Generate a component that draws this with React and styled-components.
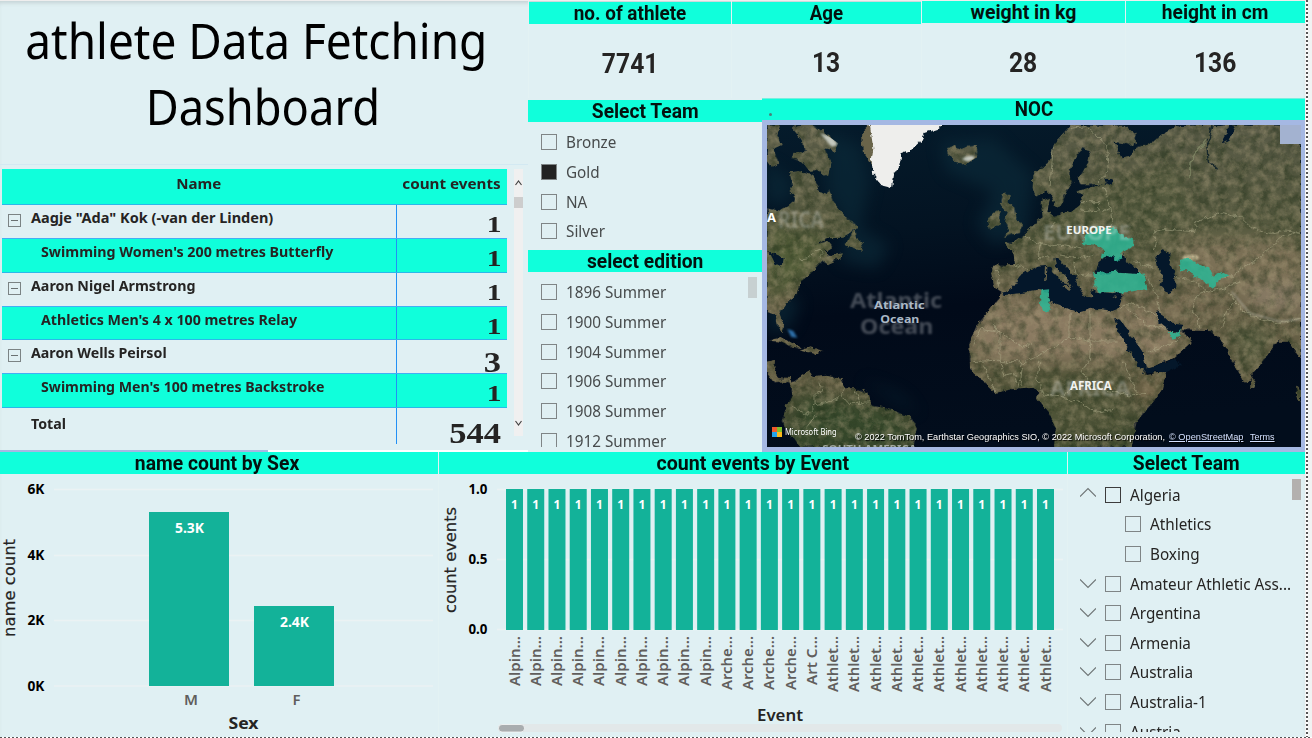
import React from "react";
import styled, { createGlobalStyle, css } from "styled-components";

const GlobalStyle = createGlobalStyle`
  *, *::before, *::after { box-sizing: border-box; }
  body { margin: 0; background: #f3f3f3; overflow: hidden; }
`;

const SEGOE = `"Noto Sans", "Open Sans", sans-serif`;
const DIN = `Roboto, "Liberation Sans", sans-serif`;
const MINT = "#10ffdb";
const BG = "#e0f0f3";
const BAR = "#13b299";

const Page = styled.div`
  display: grid;
  grid-template-columns: 1305px 7px;
  grid-template-rows: 737px 1px;
  width: 1312px;
  height: 738px;
  overflow: hidden;
  font-family: ${SEGOE};
  color: #252423;
`;
const Canvas = styled.main`
  display: grid;
  grid-template-rows: 452px 285px;
  background: ${BG};
  box-shadow: inset 0 1px 0 #efeeee, inset 0 5px 4px -2px #c4d2d4;
`;
const RightEdge = styled.div`
  margin-left: 1px;
  width: 6px;
  background: repeating-linear-gradient(180deg, #555 0 2px, #fff 2px 4px) 0 0 / 2px 100% no-repeat, #f1f3f3;
`;
const BottomEdge = styled.div`
  grid-column: 1 / -1;
  background: repeating-linear-gradient(90deg, #555 0 2px, #fff 2px 4px);
`;

const Top = styled.section`
  display: grid;
  grid-template-columns: 528px 777px;
`;
const Bottom = styled.section`
  display: grid;
  grid-template-columns: 438px 629px 238px;
`;
const Panel = styled.section`
  display: flex;
  flex-direction: column;
  min-width: 0;
  overflow: hidden;
  ${(p) => p.$divided && css`border-left: 1px solid #e3f2f3;`}
`;
const Fit = styled.span`
  display: inline-block;
  white-space: nowrap;
  transform: scaleX(${(p) => p.$x || 1});
  transform-origin: ${(p) => p.$o || "left"} center;
`;
const Header = styled.h2`
  margin: 0;
  height: ${(p) => p.$h || 22}px;
  flex: none;
  display: flex;
  justify-content: center;
  align-items: flex-start;
  padding-top: ${(p) => p.$pt ?? 1}px;
  padding-right: ${(p) => p.$pr || 0}px;
  background: ${MINT};
  color: #04120f;
  font: 700 19.5px/22px ${DIN};
`;

/* title and matrix */
const Left = styled.div`
  display: flex;
  flex-direction: column;
`;
const Title = styled.h1`
  margin: 0;
  height: 165px;
  padding: 7px 16px 0 0;
  display: flex;
  flex-direction: column;
  align-items: center;
  font: 400 49px/66px ${SEGOE};
  color: #000;
  border-bottom: 1px solid #d3e9f2;
`;
const SecondLine = styled.span`
  padding-left: 13px;
`;
const MatrixWrap = styled.div`
  display: flex;
  height: 285px;
  padding: 4px 4px 0 2px;
  gap: 7px;
`;
const Matrix = styled.div`
  width: 505px;
  display: flex;
  flex-direction: column;
`;
const Row = styled.div`
  display: grid;
  grid-template-columns: 394px 111px;
  grid-template-rows: 100%;
  height: ${(p) => p.$h}px;
  background: ${(p) => (p.$fill ? MINT : "transparent")};
  border-top: ${(p) => (p.$fill && !p.$head ? "1px solid #45adf4" : "0")};
  border-bottom: ${(p) => (p.$fill ? "1px solid #2cb7ea" : "0")};
`;
const HeadCell = styled.div`
  padding: 5px ${(p) => (p.$right ? 6 : 0)}px 0 0;
  text-align: ${(p) => (p.$right ? "right" : "center")};
  font: 700 14.5px/19px ${SEGOE};
`;
const NameCell = styled.div`
  display: flex;
  padding: ${(p) => p.$pt || 2}px 0 0 ${(p) => p.$pl}px;
  font: 700 14.5px/20px ${SEGOE};
`;
const NumCell = styled.div`
  display: flex;
  justify-content: flex-end;
  padding: ${(p) => p.$pt}px 6px 0 0;
  border-left: 1px solid #2290f5;
  font: 700 ${(p) => p.$size}px/30px "Liberation Serif", serif;
`;
const Toggle = styled.span`
  width: 13px;
  height: 13px;
  margin: 7px 10px 0 0;
  border: 1px solid #7b8384;
  display: flex;
  align-items: center;
  justify-content: center;
  &::after { content: ""; width: 7px; height: 1px; background: #6a7172; }
`;
const Scroll = styled.div`
  width: 9px;
  height: 267px;
  background: #f0f0f0;
  display: flex;
  flex-direction: column;
  align-items: center;
  padding: 11px 0 10px;
`;
const ScrollThumb = styled.i`
  width: 9px;
  height: 11px;
  margin-top: 11px;
  margin-bottom: auto;
  background: #cdcdcd;
`;
const LeftRule = styled.div`
  height: 2px;
  background: linear-gradient(90deg, #a5b8e3 0 268px, #fff 268px);
`;

/* cards */
const Right = styled.div`
  display: grid;
  grid-template-rows: 98px 354px;
`;
const Cards = styled.div`
  display: grid;
  grid-template-columns: 203px 190px 204px 180px;
`;
const Card = styled.div`
  padding-top: ${(p) => p.$pt}px;
  border-left: 1px solid #e3f2f3;
  display: flex;
  flex-direction: column;
`;
const CardValue = styled.div`
  padding-top: ${(p) => p.$pt || 23}px;
  text-align: center;
  font: 700 28px/34px ${DIN};
`;
const Lower = styled.div`
  display: grid;
  grid-template-columns: 234px 543px;
  min-height: 0;
`;
const Slicers = styled.div`
  padding-top: 2px;
  display: flex;
  flex-direction: column;
`;

/* checkbox lists */
const List = styled.div`
  display: flex;
  height: ${(p) => p.$h}px;
  overflow: hidden;
  padding: ${(p) => p.$pt}px ${(p) => p.$pr || 5}px 0 ${(p) => p.$pl}px;
`;
const Items = styled.ul`
  margin: 0;
  padding: 0;
  flex: 1;
  min-width: 0;
  list-style: none;
`;
const Item = styled.li`
  height: 29.65px;
  display: flex;
  align-items: center;
  padding-left: ${(p) => p.$indent || 0}px;
  font: 400 15.5px/20px ${SEGOE};
  color: ${(p) => (p.$dark ? "#252423" : "#474b4c")};
  svg { flex: none; margin-right: 9px; }
`;
const Box = styled.span`
  flex: none;
  width: 16px;
  height: 16px;
  margin-right: 9px;
  border: 1px solid ${(p) => (p.$dark ? "#3c3c3c" : "#7f8586")};
  background: ${(p) => (p.$on ? "#222" : "transparent")};
`;
const ListThumb = styled.i`
  flex: none;
  width: 9px;
  height: 21px;
  margin-top: ${(p) => p.$mt}px;
  background: ${(p) => p.$c};
`;

/* map */
const MapPanel = styled.div`
  display: flex;
  flex-direction: column;
  background: #a5b8e3;
`;
const MapHeader = styled(Header)`
  position: relative;
  border-top: 1px solid #76efdf;
`;
const Dot = styled.i`
  position: absolute;
  left: 7px;
  top: 14px;
  width: 3px;
  height: 3px;
  border-radius: 50%;
  background: #4a8079;
`;
const MapFrame = styled.div`
  position: relative;
  width: 534px;
  height: 322px;
  margin: 5px 0 0 5px;
  overflow: hidden;
  > svg { display: block; }
`;
const Corner = styled.i`
  position: absolute;
  right: 0;
  top: 0;
  width: 21px;
  height: 19px;
  background: #a3b2d0;
`;
const MapFoot = styled.div`
  position: absolute;
  left: 5px;
  right: 0;
  bottom: 4px;
  display: flex;
  align-items: flex-end;
  color: #fff;
`;
const BingMark = styled.span`
  display: grid;
  grid-template-columns: 5px 5px;
  gap: 0;
  height: 10px;
  margin-bottom: 6px;
  i { width: 5px; height: 5px; }
  i:nth-child(1) { background: #f0592b; }
  i:nth-child(2) { background: #80bc2d; }
  i:nth-child(3) { background: #21a2ea; }
  i:nth-child(4) { background: #fbb91b; }
`;
const BingText = styled.span`
  width: 70px;
  margin: 0 0 4px 3px;
  font: 400 9px/14px ${SEGOE};
`;
const Credit = styled.span`
  width: ${(p) => p.$w}px;
  white-space: nowrap;
  font: 400 9.5px/13px "Liberation Sans", sans-serif;
  text-shadow: 1px 1px 1px #000;
  color: ${(p) => (p.$link ? "#d3e0ff" : "#fff")};
  span { text-decoration: ${(p) => (p.$link ? "underline" : "none")}; }
`;

const Label = ({ x, y, w, size, children, fill = "#252423", weight = 700, anchor = "start", family = SEGOE, rotate, ...rest }) => (
  <text
    x={rotate ? undefined : x}
    y={rotate ? undefined : y}
    transform={rotate ? `translate(${x} ${y}) rotate(-90)` : undefined}
    textLength={w}
    lengthAdjust="spacingAndGlyphs"
    textAnchor={anchor}
    fontFamily={family}
    fontSize={size}
    fontWeight={weight}
    fill={fill}
    {...rest}
  >
    {children}
  </text>
);

const LAND = [
  "M21 340 60 347 84 334 104 318 104 300 88 285 96 262 90 232 120 228 160 240 166 262 178 290 196 300 208 282 214 302 225 330 250 360 285 385 290 402 250 425 205 427 165 448 200 438 215 456 192 470 210 482 250 475 240 490 200 508 186 498 150 538 122 560 112 600 75 630 58 655 72 690 68 712 50 690 42 658 21 652Z",
  "M21 90H60L52 120 62 150 40 160 58 205 35 215 21 195Z",
  "M95 95 120 90H160L200 120 235 145 225 168 195 160 212 200 205 245 180 225 150 230 130 205 95 190 100 172 135 172 128 135Z",
  "M256 452 268 425 284 408 288 430 302 440 312 468 285 460Z",
  "M25 737 50 728 75 732 128 762 98 758 60 740Z",
  "M122 766 150 757 192 768 160 776Z",
  "M21 800 45 795 42 835 60 850 92 852 96 868 78 862 45 864 21 830Z",
  "M90 868 125 842 150 828 158 846 200 842 245 852 252 880 290 880 322 895 332 930 400 946 455 968 470 1000 462 1056H120L95 1020 65 980 80 935 96 900Z",
  "M562 158 585 150 590 165 620 152 650 150 654 182 615 210 582 200 580 186 566 178Z",
  "M725 300 750 298 742 322 765 342 770 370 786 392 780 416 755 418 732 427 750 402 735 382 742 352 722 330Z",
  "M698 355 718 348 720 388 690 404 684 380Z",
  "M735 445 765 440 790 420 830 382 848 370 842 320 870 308 862 350 880 365 935 350 960 330 970 300 950 288 1000 275 1030 268 960 268 955 250 985 200 992 165 965 160 940 200 925 235 938 262 920 290 905 330 885 335 875 300 860 285 830 305 818 280 820 240 870 195 880 150 930 95 930 90H1092L1130 120 1120 150 1060 140 1085 190 1110 185 1130 155 1180 140 1200 122 1230 105 1260 90H1623V790L1605 765 1585 740 1550 740 1530 770 1500 810 1478 835 1460 867 1435 830 1400 760 1390 745 1370 725 1345 705 1270 703 1250 690 1262 702 1295 740 1240 790 1160 822 1148 816 1160 840 1218 830 1205 885 1180 920 1130 980 1115 1056H882L888 1000 866 950 828 905 842 890 815 876 760 882 706 893 660 850 630 822 628 745 650 690 690 645 720 605 722 590 704 578 693 530 700 512 765 510 760 470Z",
  "M1472 842 1486 860 1484 878 1474 878Z",
  "M1608 870 1623 890V925L1612 905Z",
];
const SEAS = [
  "M722 590 755 582 780 545 830 515 868 512 885 540 905 560 932 572 915 540 885 512 880 490 900 495 945 545 960 580 975 605 1000 608 988 582 1012 590 1060 595 1084 590 1084 620 1075 642 1060 648 1000 640 962 652 930 645 900 630 865 618 862 590 830 584 780 595 735 600Z",
  "M1010 532 1020 492 1050 476 1070 494 1092 478 1100 505 1130 520 1135 535 1070 530 1030 542Z",
  "M1186 490 1210 466 1235 475 1228 508 1246 540 1246 580 1222 592 1198 570 1208 540 1190 512Z",
  "M1062 668 1084 676 1112 718 1146 768 1158 815 1150 834 1128 800 1096 750 1074 708Z",
  "M1190 648 1210 660 1236 686 1270 690 1256 712 1232 714 1214 696 1196 682Z",
  "M1150 836 1160 818 1200 808 1250 788 1262 812 1220 830Z",
  "M1036 248 1058 250 1056 272 1040 265Z",
  "M1405 90H1425L1408 138 1385 145 1400 118Z",
  "M28 470 48 482 68 490 65 515 45 505Z",
];
const BORDERS =
  "M115 492 150 488 168 462 182 470 186 505M640 748 665 700 720 710 790 760 815 745M700 690 720 712V795L640 800M720 800H790L820 790 875 760 930 725M930 650V725L990 740V735M990 650V738H1070M990 740 985 800 965 830 1000 880 1060 890M720 795 735 840 760 835 775 875M670 815 690 850 705 890M790 800 780 870M840 800 830 850 850 900 900 905 940 880M900 905 960 920 1000 950 1060 940M1060 890 1110 900 1160 895M1090 800 1110 850 1130 890M705 530H715V575M765 510 805 525M790 425 840 445 835 490 870 485M840 445 880 455 920 450 970 460M870 400 890 380M960 345 1010 350 1020 320 960 320M1020 350 1050 340 1040 300 1030 275M1050 340 1060 400M900 480 960 490 1000 480M940 500 950 540 1010 545M1180 410 1220 402 1300 410 1310 380 1385 352 1440 365 1470 395 1530 415 1580 405 1623 412M1180 410 1190 440 1180 465M1620 405 1560 430 1500 490 1440 520 1420 545 1370 550M1245 545 1290 550 1340 590 1310 600 1300 640 1320 700M1340 590 1390 580 1440 560M1410 590 1430 630 1480 665 1560 685 1623 668M1385 700 1400 650 1430 620M1160 545 1190 600 1200 650M1075 642 1120 625 1190 660M1100 640 1160 690 1220 700M1160 770 1230 750 1262 725M880 150 870 280M930 100 980 95 1040 150 1045 230 1010 262M1120 500 1180 520M100 935 140 960 165 930 165 900 185 885 180 860M165 930 210 920 245 900 250 880M285 885 300 925 325 920M245 900 265 925 300 925M165 960 140 1000";

const WorldMap = () => (
  <svg width="534" height="322" viewBox="21 90 1602 966">
    <defs>
      <linearGradient id="ocean" x1="0" y1="0" x2="0.15" y2="1">
        <stop offset="0" stopColor="#051b2b" />
        <stop offset="0.35" stopColor="#031322" />
        <stop offset="0.6" stopColor="#010a19" />
        <stop offset="1" stopColor="#020d1c" />
      </linearGradient>
      <linearGradient id="land" x1="0" y1="90" x2="0" y2="1056" gradientUnits="userSpaceOnUse">
        <stop offset="0" stopColor="#585a46" />
        <stop offset="0.35" stopColor="#55593e" />
        <stop offset="0.55" stopColor="#6b634a" />
        <stop offset="0.8" stopColor="#5e5a40" />
        <stop offset="1" stopColor="#34432a" />
      </linearGradient>
      <filter id="soft" colorInterpolationFilters="sRGB"><feGaussianBlur stdDeviation="22" /></filter>
      <filter id="ghost" colorInterpolationFilters="sRGB"><feGaussianBlur stdDeviation="3.5" /></filter>
      <filter id="rough" x="-5%" y="-5%" width="110%" height="110%" colorInterpolationFilters="sRGB">
        <feTurbulence type="fractalNoise" baseFrequency="0.05" numOctaves="3" seed="4" />
        <feDisplacementMap in="SourceGraphic" scale="20" xChannelSelector="R" yChannelSelector="G" />
      </filter>
      <filter id="grainDark" x="0" y="0" width="100%" height="100%" colorInterpolationFilters="sRGB">
        <feTurbulence type="fractalNoise" baseFrequency="0.03" numOctaves="5" seed="9" />
        <feColorMatrix values="0 0 0 0 0.13  0 0 0 0 0.19  0 0 0 0 0.1  2.4 0 0 0 -0.95" />
      </filter>
      <filter id="grainLight" x="0" y="0" width="100%" height="100%" colorInterpolationFilters="sRGB">
        <feTurbulence type="fractalNoise" baseFrequency="0.04" numOctaves="5" seed="21" />
        <feColorMatrix values="0 0 0 0 0.66  0 0 0 0 0.61  0 0 0 0 0.48  0 2.4 0 0 -0.92" />
      </filter>
      <clipPath id="landClip">
        {LAND.map((d) => <path key={d} d={d} />)}
      </clipPath>
    </defs>
    <rect x="21" y="90" width="1602" height="966" fill="url(#ocean)" />
    <g filter="url(#soft)" fill="#0c2c3b" opacity="0.6">
      <path d="M200 110 300 150 330 260 300 400 390 450 350 520 240 500 260 400 200 290Z" />
      <path d="M540 140 700 130 820 240 800 420 700 450 650 390 700 290 560 230Z" />
      <path d="M21 560 120 620 90 700 21 720ZM21 200 100 260 80 330 21 320Z" />
      <path d="M480 960 420 900 300 850 400 910Z" />
    </g>
    <g filter="url(#rough)">
      {LAND.map((d) => <path key={d} d={d} fill="url(#land)" />)}
    </g>
    <g clipPath="url(#landClip)">
      <g filter="url(#soft)">
        <path d="M650 690 740 620 860 620 1060 660 1110 760 1090 800 640 790Z" fill="#8a7a61" />
        <path d="M1080 640 1180 650 1280 740 1160 810Z" fill="#8a7a61" />
        <path d="M1180 600 1350 600 1330 690 1230 670Z" fill="#776b52" />
        <path d="M1240 430 1500 430 1623 440V640L1450 620 1300 540Z" fill="#7b7056" />
        <path d="M1450 580 1623 560V650L1500 640Z" fill="#897b66" />
        <path d="M21 400 200 430 150 540 21 620Z" fill="#515c38" />
        <path d="M640 830 1080 840 1100 1056H860L820 880Z" fill="#4f5438" />
        <path d="M1400 690 1550 700 1470 840Z" fill="#555a3e" />
        <path d="M1140 870 1200 860 1150 950Z" fill="#866f52" />
        <path d="M120 900 400 950 460 1056H100Z" fill="#37492c" />
        <path d="M900 320 1250 200 1300 380 1050 440 860 430Z" fill="#52583d" />
      </g>
      <ellipse cx="1292" cy="488" rx="24" ry="9" fill="#d8c8a2" filter="url(#ghost)" />
      <rect x="21" y="90" width="1602" height="966" filter="url(#grainDark)" opacity="0.5" />
      <rect x="21" y="90" width="1602" height="966" filter="url(#grainLight)" opacity="0.42" />
      <path d="M180 115 215 125 235 150 215 155ZM605 192 620 184 640 182 645 192 622 200Z" fill="#dbe0da" opacity="0.8" filter="url(#ghost)" />
      <path d="M1415 590 1470 655 1560 680 1620 672" fill="none" stroke="#c7c8c0" strokeWidth="4" opacity="0.5" filter="url(#ghost)" />
      <path d="M1340 130 1310 170 1290 200 1290 250" fill="none" stroke="#8d9671" strokeWidth="5" opacity="0.6" filter="url(#rough)" />
      <path d="M1360 90 1340 150 1345 200 1370 220" fill="none" stroke="#16262a" strokeWidth="4" filter="url(#rough)" />
    </g>
    <g filter="url(#rough)" fill="#04172a">
      {SEAS.map((d) => <path key={d} d={d} />)}
    </g>
    <g filter="url(#rough)" fill="#69644a">
      <path d="M855 515 862 520 860 555 852 560ZM905 572 935 574 925 585ZM1060 603 1075 601 1070 608Z" />
      <path d="M305 110 325 90H345L350 200 340 215 312 175Z" />
    </g>
    <path filter="url(#rough)" d="M328 84H552L530 105 490 118 478 142 450 168 425 178 418 212 402 240 396 276 362 268 340 240 335 200 340 160Z" fill="#eeeeec" />
    <path d="M82 702 100 708 112 728 94 726Z" fill="#2d6fa8" filter="url(#ghost)" />
    <path d={BORDERS} filter="url(#rough)" fill="none" stroke="#b7b592" strokeWidth="2.6" opacity="0.55" />
    <g fill="#2db796" opacity="0.85" filter="url(#rough)">
      <path d="M968 445 975 420 1010 400 1070 398 1075 415 1120 435 1120 455 1080 475 1085 490 1065 498 1060 485 1045 480 1025 488 1030 465 1010 450Z" />
      <path d="M1000 535 1070 530 1150 535 1162 582 1100 592 1020 592 1005 570Z" />
      <path d="M845 585 868 583 863 610 874 630 857 655 840 622Z" />
      <path d="M1260 495 1285 486 1310 508 1345 515 1360 545 1390 530 1408 542 1370 552 1365 582 1310 545 1275 525 1262 537Z" />
      <path d="M1222 714 1250 715 1265 698 1258 725 1235 731Z" />
    </g>
    <g filter="url(#ghost)" opacity="0.26">
      <Label x="54" y="400" w="138" size="70" fill="#fff">RICA</Label>
      <Label x="270" y="640" w="276" size="64" fill="#fff">Atlantic</Label>
      <Label x="300" y="716" w="220" size="64" fill="#fff">Ocean</Label>
      <Label x="848" y="436" w="264" size="64" fill="#fff">EUROPE</Label>
      <Label x="870" y="902" w="240" size="64" fill="#fff">AFRICA</Label>
    </g>
    <Label x="21" y="381" w="27" size="36" fill="#fff">A</Label>
    <Label x="342" y="642" w="152" size="33" fill="#aab8c6">Atlantic</Label>
    <Label x="361" y="683" w="117" size="33" fill="#aab8c6">Ocean</Label>
    <Label x="919" y="416" w="136" size="34" fill="#f1f3f0">EUROPE</Label>
    <Label x="930" y="884" w="125" size="35" fill="#f1f3f0">AFRICA</Label>
    <Label x="187" y="1074" w="283" size="32" fill="#b9bfb8" opacity="0.8">SOUTH AMERICA</Label>
  </svg>
);

const ROWS = [
  { name: 'Aagje "Ada" Kok (-van der Linden)', n: "1", h: 33, x: 1.0 },
  { name: "Swimming Women's 200 metres Butterfly", n: "1", h: 35, child: true, x: 0.982 },
  { name: "Aaron Nigel Armstrong", n: "1", h: 33, x: 0.983 },
  { name: "Athletics Men's 4 x 100 metres Relay", n: "1", h: 34, child: true, x: 0.98 },
  { name: "Aaron Wells Peirsol", n: "3", h: 33, x: 0.98 },
  { name: "Swimming Men's 100 metres Backstroke", n: "1", h: 35, child: true, x: 0.975 },
];

const Chevron = ({ up }) => (
  <svg width="16" height="16" viewBox="0 0 16 16" fill="none" stroke="#6d7374" strokeWidth="1.1">
    <path d={up ? "M0 9.5 8 1.5 16 9.5" : "M0 3.5 8 11.5 16 3.5"} />
  </svg>
);
const Arrow = ({ up }) => (
  <svg width="7" height="6" viewBox="0 0 7 6" fill="none" stroke="#444" strokeWidth="1.2">
    <path d={up ? "M0.5 5 3.5 1 6.5 5" : "M0.5 1 3.5 5 6.5 1"} />
  </svg>
);

const SexChart = () => (
  <svg width="438" height="263" viewBox="0 474 438 263">
    {[["6K", 489.5], ["4K", 555.5], ["2K", 620.5], ["0K", 686]].map(([t, y]) => (
      <g key={t}>
        <path d={`M54 ${y}H433`} stroke="#ebf2f3" strokeWidth="1.4" />
        <Label x="27.5" y={y + 4.5} w="17" size="13.5" fill="#000">{t}</Label>
      </g>
    ))}
    <rect x="149" y="512" width="80" height="174" fill={BAR} />
    <rect x="254" y="606" width="80" height="80" fill={BAR} />
    <Label x="175" y="533" w="29" size="13.5" fill="#fff">5.3K</Label>
    <Label x="280" y="627" w="29" size="13.5" fill="#fff">2.4K</Label>
    <Label x="184" y="705" w="14" size="14.5" weight="600" fill="#605e5c">M</Label>
    <Label x="292.500" y="705" w="8" size="14.5" weight="600" fill="#605e5c">F</Label>
    <Label x="228.500" y="729" w="30" size="16.5" family='"Noto Sans", sans-serif'>Sex</Label>
    <Label rotate x="15" y="637" w="98" size="15" weight="500" family='"DejaVu Sans", sans-serif' stroke="#252423" strokeWidth="0.2">name count</Label>
  </svg>
);

const TICKS = [
  ...Array(10).fill(["Alpin...", 50]),
  ...Array(4).fill(["Arche...", 54]),
  ["Art C...", 49],
  ...Array(11).fill(["Athlet...", 56]),
];
const EventChart = () => (
  <svg width="628" height="263" viewBox="439 474 628 263">
    {[["1.0", 489.5], ["0.5", 559.5], ["0.0", 629.5]].map(([t, y]) => (
      <g key={t}>
        <path d={`M497 ${y}H1063`} stroke="#ebf2f3" strokeWidth="1.4" />
        <Label x="468.500" y={y + 4.5} w="19" size="13.5" fill="#000">{t}</Label>
      </g>
    ))}
    {TICKS.map(([t, w], i) => {
      const x = 506 + i * 21.24;
      return (
        <g key={i}>
          <rect x={x} y="489" width="17" height="141" fill={BAR} />
          <Label x={x + 8.5} y="509" size="12" anchor="middle" fill="#fff">1</Label>
          <Label rotate x={x + 13.5} y="636" w={w} size="14" weight="600" anchor="end" fill="#605e5c">{t}</Label>
        </g>
      );
    })}
    <Label rotate x="456" y="613" w="106" size="15" weight="500" family='"DejaVu Sans", sans-serif' stroke="#252423" strokeWidth="0.2">count events</Label>
    <Label x="757" y="720.500" w="46" size="15.5" weight="600">Event</Label>
    <rect x="498" y="724" width="564" height="8" rx="4" fill="#e2e8e9" />
    <rect x="498.500" y="724.500" width="26" height="7.500" rx="3.500" fill="#a9adaf" stroke="#f6f8f8" strokeWidth="0.8" />
  </svg>
);

const TEAMS = [
  ["Algeria", "up"], ["Athletics", null], ["Boxing", null], ["Amateur Athletic Ass...", "down"],
  ["Argentina", "down"], ["Armenia", "down"], ["Australia", "down"], ["Australia-1", "down"], ["Austria", "down"],
];

export default function App() {
  return (
    <>
      <GlobalStyle />
      <Page>
        <Canvas>
          <Top>
            <Left>
              <Title>
                <Fit $x={0.938} $o="center">athlete Data Fetching</Fit>
                <SecondLine><Fit $x={0.924} $o="center">Dashboard</Fit></SecondLine>
              </Title>
              <MatrixWrap>
                <Matrix>
                  <Row $fill $head $h={36}>
                    <HeadCell><Fit $x={1.04} $o="center">Name</Fit></HeadCell>
                    <HeadCell $right><Fit $x={1.05} $o="right">count events</Fit></HeadCell>
                  </Row>
                  {ROWS.map((r) => (
                    <Row key={r.name} $fill={r.child} $h={r.h}>
                      <NameCell $pl={r.child ? 39 : 6} $pt={2}>
                        {!r.child && <Toggle />}
                        <Fit $x={r.x}>{r.name}</Fit>
                      </NameCell>
                      <NumCell $size={r.n === "3" ? 30 : 23} $pt={r.n === "3" ? 7 : 5}>
                        <Fit $x={r.n === "3" ? 1.15 : 1.28} $o="right">{r.n}</Fit>
                      </NumCell>
                    </Row>
                  ))}
                  <Row $h={36}>
                    <NameCell $pl={29} $pt={5}><Fit $x={0.98}>Total</Fit></NameCell>
                    <NumCell $size={30} $pt={10}><Fit $x={1.15} $o="right">544</Fit></NumCell>
                  </Row>
                </Matrix>
                <Scroll>
                  <Arrow up />
                  <ScrollThumb />
                  <Arrow />
                </Scroll>
              </MatrixWrap>
              <LeftRule />
            </Left>
            <Right>
              <Cards>
                <Card $pt={2}>
                  <Header><Fit $x={0.97} $o="center">no. of athlete</Fit></Header>
                  <CardValue><Fit $x={0.88} $o="center">7741</Fit></CardValue>
                </Card>
                <Card $pt={2}>
                  <Header><Fit $x={0.96} $o="center">Age</Fit></Header>
                  <CardValue $pt={22}><Fit $x={0.88} $o="center">13</Fit></CardValue>
                </Card>
                <Card $pt={1}>
                  <Header><Fit $x={1} $o="center">weight in kg</Fit></Header>
                  <CardValue><Fit $x={0.88} $o="center">28</Fit></CardValue>
                </Card>
                <Card $pt={1}>
                  <Header><Fit $x={0.985} $o="center">height in cm</Fit></Header>
                  <CardValue><Fit $x={0.88} $o="center">136</Fit></CardValue>
                </Card>
              </Cards>
              <Lower>
                <Slicers>
                  <Header><Fit $x={0.985} $o="center">Select Team</Fit></Header>
                  <List $h={128} $pt={5.5} $pl={13}>
                    <Items>
                      {["Bronze", "Gold", "NA", "Silver"].map((t) => (
                        <Item key={t}><Box $on={t === "Gold"} /><Fit $x={0.985}>{t}</Fit></Item>
                      ))}
                    </Items>
                  </List>
                  <Header><Fit $x={0.985} $o="center">select edition</Fit></Header>
                  <List $h={175} $pt={5.5} $pl={13}>
                    <Items>
                      {[1896, 1900, 1904, 1906, 1908, 1912].map((y) => (
                        <Item key={y}><Box /><Fit $x={0.985}>{`${y} Summer`}</Fit></Item>
                      ))}
                    </Items>
                    <ListThumb $c="#c7d0d1" $mt={-1} />
                  </List>
                </Slicers>
                <MapPanel>
                  <MapHeader $pt={0}><Dot /><Fit $x={0.96} $o="center">NOC</Fit></MapHeader>
                  <MapFrame>
                    <WorldMap />
                    <Corner />
                    <MapFoot>
                      <BingMark><i /><i /><i /><i /></BingMark>
                      <BingText><Fit $x={0.84}>Microsoft Bing</Fit></BingText>
                      <Credit $w={314}><Fit $x={0.967}>© 2022 TomTom, Earthstar Geographics SIO, © 2022 Microsoft Corporation,</Fit></Credit>
                      <Credit $w={81} $link><Fit $x={0.97}>© OpenStreetMap</Fit></Credit>
                      <Credit $w={30} $link><Fit $x={0.95}>Terms</Fit></Credit>
                    </MapFoot>
                  </MapFrame>
                </MapPanel>
              </Lower>
            </Right>
          </Top>
          <Bottom>
            <Panel>
              <Header $pr={3}><Fit $x={0.99} $o="center">name count by Sex</Fit></Header>
              <SexChart />
            </Panel>
            <Panel $divided>
              <Header><Fit $x={1.005} $o="center">count events by Event</Fit></Header>
              <EventChart />
            </Panel>
            <Panel $divided>
              <Header><Fit $x={0.985} $o="center">Select Team</Fit></Header>
              <List $h={258} $pt={5.8} $pl={12} $pr={4}>
                <Items>
                  {TEAMS.map(([t, dir], i) => (
                    <Item key={t} $dark $indent={dir ? 0 : 45}>
                      {dir && <Chevron up={dir === "up"} />}
                      <Box $dark={i === 0} />
                      <Fit $x={0.985}>{t}</Fit>
                    </Item>
                  ))}
                </Items>
                <ListThumb $c="#b3b0ae" $mt={-1} />
              </List>
            </Panel>
          </Bottom>
        </Canvas>
        <RightEdge />
        <BottomEdge />
      </Page>
    </>
  );
}
